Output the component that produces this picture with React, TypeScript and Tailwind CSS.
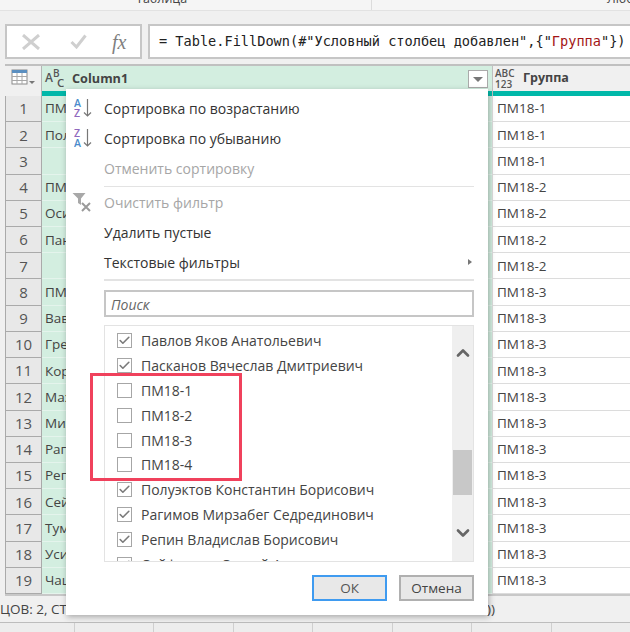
// Power Query: фильтр столбца Column1
import type { ReactNode } from "react";
import { Check, ChevronUp, ChevronDown } from "lucide-react";

const ROWS = ["ПМ", "Пол", "", "ПМ", "Оси", "Пан", "", "ПМ", "Вав", "Гре", "Кор", "Мах", "Мих", "Раг", "Реп", "Сей", "Тум", "Уси", "Чаш"];
const GROUPS = ROWS.map((_, i) => (i < 3 ? "ПМ18-1" : i < 7 ? "ПМ18-2" : "ПМ18-3"));

const LIST = [
  { label: "Павлов Яков Анатольевич", checked: true },
  { label: "Пасканов Вячеслав Дмитриевич", checked: true },
  { label: "ПМ18-1", checked: false },
  { label: "ПМ18-2", checked: false },
  { label: "ПМ18-3", checked: false },
  { label: "ПМ18-4", checked: false },
  { label: "Полуэктов Константин Борисович", checked: true },
  { label: "Рагимов Мирзабег Седрединович", checked: true },
  { label: "Репин Владислав Борисович", checked: true },
  { label: "Сейфуллин Сергей Алексеевич", checked: true },
];

function SortIcon({ top, bottom }: { top: string; bottom: string }) {
  return (
    <svg width="20" height="22" viewBox="0 0 20 22" className="absolute left-[8px] top-[4px]">
      <text x="0" y="10" fontSize="10.5" fontWeight="600" fontFamily="Open Sans" fill={top === "A" ? "#4a8ccc" : "#9068bd"}>{top}</text>
      <text x="0" y="20" fontSize="10.5" fontWeight="600" fontFamily="Open Sans" fill={bottom === "A" ? "#4a8ccc" : "#9068bd"}>{bottom}</text>
      <path d="M13.5 2v17M10 15.5l3.5 3.5 3.5-3.5" fill="none" stroke="#777" strokeWidth="1.2" />
    </svg>
  );
}

function MenuItem({ label, disabled, icon }: { label: string; disabled?: boolean; icon?: ReactNode }) {
  return (
    <div className={`relative h-[30px] flex items-center pl-[38px] text-[14px] ${disabled ? "text-[#a6a6a6]" : "text-[#333]"}`}>
      {icon}
      {label}
    </div>
  );
}

export default function App() {
  return (
    <div className="relative w-[630px] h-[632px] overflow-hidden bg-[#f0f0f0] text-[#444] font-['Open_Sans','Liberation_Sans',sans-serif]">
      {/* лента сверху */}
      <div className="h-[11px] bg-[#f5f5f5] border-b border-[#e2e2e2] flex overflow-hidden">
        <div className="w-[372px] border-r border-[#dcdcdc] relative">
          <span className="absolute left-[136px] -top-[10px] text-[12.5px] text-[#444]">Таблица</span>
        </div>
        <div className="flex-1 relative">
          <span className="absolute left-[235px] -top-[10px] text-[12.5px] text-[#444] whitespace-nowrap">Любой</span>
        </div>
      </div>

      {/* строка формул */}
      <div className="flex gap-[6px] pl-[5px] mt-[13px] h-[35px]">
        <div className="w-[137px] bg-white border-2 border-[#c6c6c6] flex items-center relative">
          <svg width="18" height="16" viewBox="0 0 18 16" className="ml-[15px]"><path d="M1 1l16 14M17 1L1 15" stroke="#cfcfcf" strokeWidth="3" /></svg>
          <svg width="17" height="15" viewBox="0 0 17 15" className="ml-[30px]"><path d="M1.5 8l5 5L15.5 1.5" fill="none" stroke="#cfcfcf" strokeWidth="3" /></svg>
          <span className="ml-[25px] font-['Liberation_Serif',serif] italic text-[20px] text-[#808080]">fx</span>
        </div>
        <div className="flex-1 bg-white border-y-2 border-l-2 border-[#c6c6c6] flex items-center pl-[9px] font-['DejaVu_Sans_Mono',monospace] text-[13.6px] text-[#222] whitespace-pre overflow-hidden">
          <span>{'= Table.FillDown(#"Условный столбец добавлен",{"'}</span>
          <span className="text-[#a31515]">Группа</span>
          <span>{'"})'}</span>
        </div>
      </div>

      {/* таблица */}
      <div className="mt-[5px] ml-[5px] border-t-2 border-[#c0c0c0]">
        <div className="flex h-[30px]">
          <div className="w-[37px] h-[30px] bg-[#f0f0f0] border-r border-[#b4b4b4] pl-[6px] pt-[3px]">
            <svg width="24" height="16" viewBox="0 0 24 16">
              <rect x="1" y="1" width="15" height="14" fill="#fff" stroke="#8a8a8a" />
              <rect x="1" y="1" width="15" height="3" fill="#5b8fc0" />
              <path d="M1 7.5h15M1 11.5h15M6 4v11M11 4v11" stroke="#a8a8a8" />
              <path d="M18 12h6l-3 3z" fill="#777" />
            </svg>
          </div>
          <div className="w-[450px] flex flex-col">
            <div className="h-[25px] bg-[#d3eee0] relative">
              <svg width="20" height="20" viewBox="0 0 20 20" className="absolute left-[2px] top-[3px]">
                <text x="1" y="13" fontSize="12" fontWeight="600" fontFamily="Open Sans" fill="#555">A</text>
                <text x="9" y="8" fontSize="10" fontWeight="600" fontFamily="Open Sans" fill="#555">B</text>
                <text x="13" y="18" fontSize="11.5" fontWeight="600" fontFamily="Open Sans" fill="#555">C</text>
              </svg>
              <span className="absolute left-[30px] top-[3px] text-[12.7px] font-bold text-[#444]">Column1</span>
              <span className="absolute left-[426px] top-[4px] w-[20px] h-[18px] bg-white border border-[#aaa] flex items-center justify-center">
                <span className="w-0 h-0 border-x-[5px] border-x-transparent border-t-[5px] border-t-[#777]"></span>
              </span>
            </div>
            <div className="h-[5px] bg-[#00b8a9]"></div>
          </div>
          <div className="flex-1 flex flex-col border-l border-[#c0c0c0]">
            <div className="h-[25px] bg-[#f0f0f0] flex items-center relative">
              <span className="ml-[2px] text-[10px] leading-[11px] font-semibold text-[#555]">ABC<br />123</span>
              <span className="absolute left-[30px] text-[12.5px] font-bold text-[#444]">Группа</span>
            </div>
            <div className="h-[5px] bg-[#00b8a9]"></div>
          </div>
        </div>

        <div className="grid grid-rows-[repeat(19,1fr)] h-[500px] border-b-2 border-[#c8c8c8]">
          {ROWS.map((text, i) => (
            <div key={i} className="flex min-h-0">
              <div className="w-[37px] bg-[#e8e8e8] border border-t-0 border-[#aaaaaa] flex items-center justify-center text-[15px] text-[#555]">{i + 1}</div>
              <div className="w-[450px] bg-[#d3eee0] border-b border-[#e4f4ec] flex items-center pl-[3px] text-[13.5px] text-[#444]">{text}</div>
              <div className="flex-1 bg-white border-l border-b border-[#dcdcdc] flex items-center pl-[4px] text-[13.5px] text-[#444]">{GROUPS[i]}</div>
            </div>
          ))}
        </div>
      </div>

      {/* статусная строка */}
      <div className="h-[26px] flex items-center text-[13.5px] text-[#444] whitespace-nowrap overflow-hidden">
        ЦОВ: 2, СТРОК: 999+
        <span className="absolute left-[487px]">))</span>
      </div>
      <div className="absolute left-0 right-0 bottom-0 h-[10px] border-t border-[#bdbdbd] bg-[#ededed] flex pl-[74px]">
        {[0, 1, 2, 3, 4, 5, 6].map((n) => (
          <div key={n} className="w-[80px] border-l border-[#cfcfcf]"></div>
        ))}
      </div>

      {/* меню фильтра */}
      <div className="absolute left-[66px] top-[89px] w-[422px] h-[526px] bg-white shadow-[1px_2px_6px_rgba(0,0,0,0.3)] pt-[4px]">
        <MenuItem label="Сортировка по возрастанию" icon={<SortIcon top="A" bottom="Z" />} />
        <MenuItem label="Сортировка по убыванию" icon={<SortIcon top="Z" bottom="A" />} />
        <MenuItem label="Отменить сортировку" disabled />
        <div className="ml-[38px] mr-[14px] h-px bg-[#e3e3e3] mt-[3px]"></div>
        <MenuItem
          label="Очистить фильтр"
          disabled
          icon={
            <svg width="20" height="20" viewBox="0 0 20 20" className="absolute left-[6px] top-[5px]">
              <path d="M0.5 1h13L9 6.5V13L6 11V6.5z" fill="#a8a8a8" />
              <path d="M10 11l8 8M18 11l-8 8" stroke="#9a9a9a" strokeWidth="2" />
            </svg>
          }
        />
        <MenuItem label="Удалить пустые" />
        <div className="relative">
          <MenuItem label="Текстовые фильтры" />
          <span className="absolute left-[402px] top-[12px] w-0 h-0 border-y-[3.5px] border-y-transparent border-l-[4px] border-l-[#777]"></span>
        </div>
        <div className="ml-[38px] mr-[14px] h-[2px] bg-[#e3e3e3] mt-[2px]"></div>

        <div className="ml-[38px] mr-[14px] mt-[9px] h-[27px] border-2 border-[#c6c6c6] flex items-center pl-[5px] pt-[1px] italic text-[14px] text-[#666]">Поиск</div>

        <div className="ml-[38px] mr-[14px] mt-[8px] h-[237px] border border-[#e3e3e3] flex overflow-hidden">
          <div className="flex-1 pt-[2px] min-w-0">
            {LIST.map((item) => (
              <div key={item.label} className="h-[24.9px] flex items-center pl-[12px] text-[14px] text-[#444] whitespace-nowrap">
                <span className="w-[15px] h-[15px] border border-[#a6a6a6] bg-white flex items-center justify-center mr-[9px]">
                  {item.checked && <Check size={13} strokeWidth={3} className="text-[#7a7a7a]" />}
                </span>
                {item.label}
              </div>
            ))}
          </div>
          <div className="w-[21px] bg-[#efefef] flex flex-col items-center relative">
            <ChevronUp size={20} strokeWidth={3.2} className="text-[#666] mt-[17px]" />
            <div className="absolute top-[124px] left-[1px] w-[19px] h-[45px] bg-[#c8c8c8]"></div>
            <ChevronDown size={20} strokeWidth={3.2} className="text-[#666] absolute top-[197px]" />
          </div>
        </div>

        <div className="flex justify-end gap-[12px] mr-[14px] mt-[13px]">
          <button className="w-[75px] h-[26px] bg-[#e8e8e8] border-2 border-[#3f9bf0] text-[13.5px] text-[#555]">ОК</button>
          <button className="w-[75px] h-[26px] bg-[#e8e8e8] border-2 border-[#b0b0b0] text-[13.5px] text-[#444]">Отмена</button>
        </div>
      </div>

      {/* красная рамка */}
      <div className="absolute left-[90px] top-[373px] w-[152px] h-[108px] border-[3px] border-[#f0415c]"></div>
    </div>
  );
}
